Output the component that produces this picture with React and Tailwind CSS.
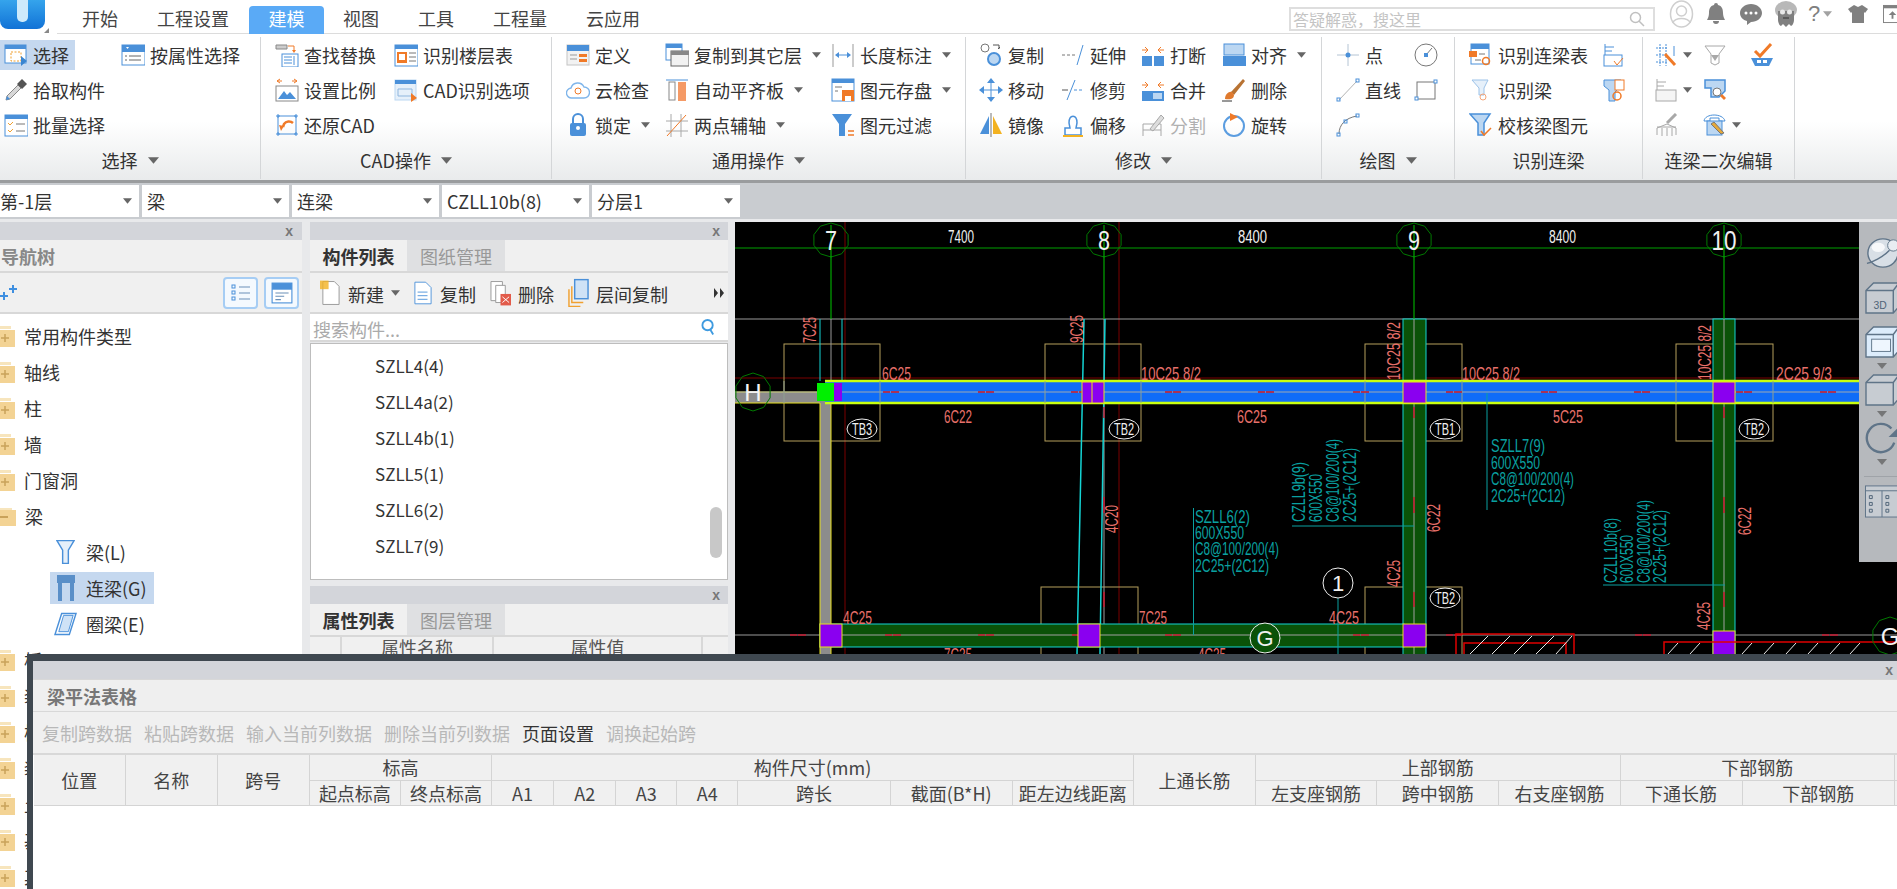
const B = "#4a90d9";
const L = "#bcd7f2";
const O = "#f07a28";
const G = "#a8a8a8";

const ICONS = {
  select: <><rect x="1" y="2" width="21" height="18" fill="#fff" stroke={B} /><rect x="1" y="2" width="21" height="4" fill={B} /><rect x="7" y="9" width="10" height="9" fill="none" stroke="#f0a030" strokeDasharray="2 1.5" /><path d="M17 13l6 5-6 5z" fill="#3a85d0" /></>,
  attr: <><rect x="1" y="2" width="23" height="20" fill="#fff" stroke={B} /><rect x="1" y="2" width="23" height="7" fill={B} /><path d="M5 4l3 0-1.500 2z" fill="#fff" /><path d="M8 13h12M8 17h12M4 13h2M4 17h2" stroke="#666" /></>,
  pick: <><path d="M2 22l1-4L14 7l3 3L6 21z" fill="#d8d8d8" stroke="#888" /><path d="M2 22l1-4 3 3z" fill={B} /><path d="M13 6l5-5 5 5-5 5z" fill="#555" /></>,
  batch: <><rect x="1" y="2" width="23" height="21" fill="#fff" stroke={B} /><rect x="1" y="2" width="23" height="4" fill={B} /><path d="M4 10l2 2 3-3M4 17l2 2 3-3" fill="none" stroke="#f0a030" /><path d="M12 11h9M12 18h9" stroke="#777" /></>,
  replace: <><path d="M1 2h11v4H1z" fill="#ccc" stroke="#888" /><path d="M13 3h6v5" fill="none" stroke={O} /><path d="M17 7l2 3 2-3z" fill={O} /><rect x="7" y="11" width="16" height="13" fill="#fff" stroke={B} /><path d="M9 14h8M9 17h8M9 20h8M19 13v9" stroke={B} /></>,
  floor: <><rect x="1" y="2" width="23" height="21" fill="#fff" stroke={B} /><rect x="1" y="2" width="23" height="4" fill={B} /><rect x="3" y="9" width="10" height="11" fill={O} /><rect x="5" y="11" width="6" height="6" fill="#fff" /><path d="M15 10h7M15 14h7M15 18h7" stroke="#777" /></>,
  scale: <><path d="M2 3h5M5 1l-3 2 3 2M17 3h5M19 1l3 2-3 2" stroke={O} fill="none" /><rect x="1" y="8" width="22" height="15" fill="#fff" stroke="#888" /><path d="M3 21l6-8 3 4 3-3 6 7z" fill={B} /></>,
  cadopt: <><rect x="1" y="2" width="21" height="20" fill="#e6f0fa" stroke={L} /><rect x="1" y="2" width="21" height="4" fill={B} /><path d="M4 11h14v7H4z" fill="none" stroke="#8fb6de" /><path d="M17 15l6 5-6 4z" fill={O} /></>,
  restore: <><rect x="3" y="3" width="18" height="18" fill="none" stroke={B} /><path d="M1 3h4M3 1v4M19 3h4M21 1v4M1 21h4M3 19v4M19 21h4M21 19v4" stroke={B} /><path d="M18 10a6 6 0 0 0-9 1l-1 3" fill="none" stroke={O} strokeWidth="2.500" /><path d="M4 12l5 1-3 5z" fill={O} /></>,
  define: <><rect x="1" y="2" width="22" height="20" fill="#f2f2f2" stroke="#c4c4c4" /><rect x="1" y="2" width="22" height="6" fill={B} /><path d="M4 12h7M4 16h7" stroke="#999" /><rect x="13" y="11" width="8" height="3" fill={O} /><rect x="13" y="16" width="8" height="3" fill={O} /></>,
  cloud: <><path d="M6 20a5 5 0 0 1-1-10 7 7 0 0 1 13-1 5.500 5.500 0 0 1 0 11z" fill="#fff" stroke="#7fb5ea" strokeWidth="1.400" /><circle cx="12" cy="13" r="3" fill="none" stroke={O} /></>,
  lock: <><rect x="4" y="10" width="16" height="13" rx="2" fill={B} /><path d="M7 10V6a5 5 0 0 1 10 0v4" fill="none" stroke={B} strokeWidth="2" /><circle cx="12" cy="15" r="2" fill="#fff" /></>,
  copyfloor: <><rect x="1" y="1" width="16" height="16" fill="#fff" stroke={B} /><rect x="1" y="1" width="16" height="4" fill={B} /><rect x="6" y="8" width="18" height="15" fill="#f2f2f2" stroke="#666" /><rect x="6" y="8" width="18" height="4" fill="#888" /></>,
  align: <><path d="M1 2h22" stroke={B} /><rect x="4" y="4" width="6" height="18" fill="#fff" stroke="#888" /><rect x="13" y="4" width="8" height="19" fill="#f59a66" /></>,
  twopoint: <><path d="M6 1v23M16 1v23M1 8h22M1 18h22" stroke={G} /><path d="M2 23L21 2" stroke={O} /></>,
  dim: <><path d="M2 1v23M22 1v23" stroke="#999" /><path d="M6 12h12" stroke={B} /><path d="M8 9l-4 3 4 3zM16 9l4 3-4 3z" fill={B} /></>,
  save: <><rect x="1" y="1" width="22" height="22" fill="#fff" stroke={B} /><rect x="1" y="1" width="22" height="4" fill={B} /><path d="M4 9h7M4 13h3" stroke="#777" /><rect x="11" y="12" width="12" height="11" fill={O} /><rect x="14" y="18" width="6" height="5" fill="#fff" /></>,
  filter: <><path d="M1 1h20l-7 10v12h-6V11z" fill={B} /><path d="M17 18h6M17 22h6" stroke={O} strokeWidth="1.500" /></>,
  copy: <><circle cx="6" cy="5" r="4" fill="#fff" stroke="#777" /><circle cx="15" cy="16" r="6" fill={L} stroke={B} strokeWidth="2" /><path d="M14 2h6v4M19 6l2-2" fill="none" stroke="#555" /></>,
  move: <><path d="M12 3v18M3 12h18" stroke={B} /><path d="M12 0l4 5H8zM12 24l4-5H8zM0 12l5-4v8zM24 12l-5-4v8z" fill={B} /></>,
  mirror: <><path d="M10 3L1 21h9z" fill={B} /><path d="M14 3l9 18h-9z" fill="#f3b221" /><path d="M12 0v24" stroke="#777" /></>,
  extend: <><path d="M1 12h13" stroke="#777" strokeDasharray="3 2" /><path d="M22 2l-6 20" stroke={B} /></>,
  trim: <><path d="M14 2L6 22" stroke={B} /><path d="M1 12h6" stroke="#555" /><path d="M13 12h10" stroke={B} strokeDasharray="3 2" /></>,
  offset: <><path d="M4 22v-7h5l-1-5c0-9 8-9 8 0l-1 5h5v7z" fill="#fff" stroke={B} strokeWidth="1.500" /><path d="M2 23h20" stroke="#f3b221" strokeWidth="2" /></>,
  cut: <><path d="M1 7h6M4 4l3 3-3 3M17 7h6M20 4l-3 3 3 3" stroke={O} fill="none" /><rect x="1" y="13" width="10" height="10" fill={B} /><rect x="13" y="13" width="10" height="10" fill={B} /></>,
  merge: <><path d="M1 7h6M4 4l3 3-3 3M17 7h6M20 4l-3 3 3 3" stroke={O} fill="none" /><rect x="1" y="13" width="22" height="10" fill={B} /><rect x="12" y="15" width="9" height="6" fill={L} /></>,
  split: <><path d="M2 23V11h18v12M2 17h18" fill="none" stroke={G} /><path d="M9 16L20 2l3 3-11 13z" fill="#ddd" stroke={G} /></>,
  alignr: <><rect x="2" y="1" width="20" height="11" fill={L} stroke={B} /><rect x="1" y="13" width="23" height="10" fill={B} /></>,
  del: <><path d="M9 14L21 1l2 2-11 14z" fill="#b87333" /><path d="M3 21c0-5 4-8 7-7l2 3c0 4-4 5-9 4z" fill="#e07a2e" /><path d="M0 23h10" stroke="#333" /></>,
  rotate: <><circle cx="12" cy="13" r="10" fill="none" stroke="#5b9de0" strokeWidth="2" /><path d="M8 0l8 4-8 4z" fill={O} /></>,
  point: <><path d="M12 1v22M1 12h22" stroke="#b4c4d4" /><circle cx="12" cy="12" r="2.500" fill={B} /></>,
  line: <><path d="M3 22L21 3" stroke="#b4b4b4" /><rect x="1" y="20" width="3" height="3" fill="none" stroke={B} /><rect x="20" y="1" width="3" height="3" fill="none" stroke={B} /></>,
  arc: <><path d="M3 21C3 12 9 5 21 3" fill="none" stroke="#777" /><rect x="1" y="20" width="3" height="3" fill="none" stroke={B} /><rect x="20" y="1" width="3" height="3" fill="none" stroke={B} /><rect x="8" y="7" width="3" height="3" fill="none" stroke={B} /></>,
  circle: <><circle cx="12" cy="12" r="11" fill="none" stroke="#777" /><path d="M12 12l6-7" stroke="#777" /><rect x="10" y="10" width="4" height="4" fill={B} /></>,
  rect: <><rect x="3" y="4" width="18" height="17" fill="none" stroke="#777" /><rect x="1" y="19" width="3" height="3" fill="#fff" stroke={B} /><rect x="20" y="2" width="3" height="3" fill="#fff" stroke={B} /></>,
  beamTable: <><rect x="2" y="1" width="18" height="20" fill="#fff" stroke={B} /><rect x="2" y="1" width="18" height="5" fill={B} /><rect x="0" y="8" width="8" height="6" fill={O} /><path d="M10 11h6M6 17h6" stroke="#777" /><circle cx="17" cy="18" r="3.500" fill="none" stroke={O} strokeWidth="1.500" /></>,
  beam: <><path d="M3 2h16l-4 8v7h-5v-7z" fill="#e6f0fa" stroke="#9cc2e8" /><circle cx="14" cy="19" r="3" fill="none" stroke="#f4a67a" /></>,
  beamCheck: <><path d="M1 1h20l-6 9v12H9V10z" fill={L} stroke={B} strokeWidth="1.500" /><path d="M12 18l3 4 7-7" fill="none" stroke={O} strokeWidth="1.500" /></>,
  stack: <><path d="M3 1v13M3 4h9M3 8h7" stroke={B} fill="none" /><rect x="2" y="12" width="18" height="11" fill="#fff" stroke={B} /><path d="M12 18l3 4 6-7" fill="none" stroke={O} /></>,
  beamDoc: <><path d="M2 2h17v6l-6 6v9H7V12L2 8z" fill={L} stroke={B} /><rect x="13" y="2" width="9" height="10" fill="#fff" stroke={O} /><circle cx="15" cy="18" r="4" fill="none" stroke={O} strokeWidth="1.500" /></>,
  grid: <><path d="M2 5h12M2 12h12M2 19h12M6 1v22M12 1v22" stroke={B} strokeDasharray="2 1" /><path d="M11 11l10 11" stroke={O} strokeWidth="3" /><path d="M20 3v10" stroke={B} /></>,
  funnel: <><path d="M2 3h20l-6 8v9l-4 2-4-2v-9z" fill="#fff" stroke={G} /><path d="M8 12h8l-4 6z" fill={G} /></>,
  okbeam: <><path d="M5 8l5 5L21 1" fill="none" stroke={O} strokeWidth="3" /><path d="M1 15h22l-4 8H5z" fill={B} /><path d="M7 17h4v3H7zM13 17h4v3h-4z" fill="#fff" /></>,
  stack2: <><path d="M3 1v13M3 4h9M3 8h7" stroke={G} fill="none" /><rect x="2" y="12" width="20" height="11" fill="#f5f5f5" stroke={G} /></>,
  beamSearch: <><path d="M2 2h20v11l-6 6H8V10H2z" fill={L} stroke={B} strokeWidth="1.500" /><circle cx="14" cy="14" r="4" fill="#fff" stroke="#777" /><path d="M17 18l4 4 2-2-4-4z" fill={O} /></>,
  brush: <><path d="M13 10L22 1" stroke={G} strokeWidth="3" /><path d="M3 22v-7l10-4 9 4v7" fill="none" stroke={G} /><path d="M3 14h19M8 15v8M13 15v8M18 15v8" stroke={G} /></>,
  phoneEdit: <><path d="M1 8C2 0 20 0 22 8H16V5H7v3z" fill="#fff" stroke={B} /><rect x="4" y="8" width="15" height="14" fill={L} stroke={B} /><path d="M8 11l10 10 3-1-10-11z" fill="#e4a83a" stroke="#777" /></>,
};

function Caret({ className = "" }) {
  return (
    <svg viewBox="0 0 10 6" className={`w-[9px] h-[6px] shrink-0 ${className}`}>
      <path d="M0 0h10L5 6z" fill="#666" />
    </svg>
  );
}

function Icon({ name }) {
  return (
    <svg viewBox="0 0 24 24" className="w-[24px] h-[24px] shrink-0">
      {ICONS[name]}
    </svg>
  );
}

function Item({ icon, label, caret, off, active }) {
  return (
    <div className={`h-[35px] flex items-center gap-[5px] ${off ? "text-[#b0b0b0]" : "text-[#333]"}`}>
      <div className={`flex items-center gap-[5px] h-[30px] ${active ? "bg-[#c5d8ef] -ml-[4px] pl-[4px] pr-[6px]" : ""}`}>
        {icon && <Icon name={icon} />}
        {label && <span className="whitespace-nowrap">{label}</span>}
      </div>
      {caret && <Caret className={label ? "ml-[5px]" : ""} />}
    </div>
  );
}

function Group({ title, width, pad, cols, caret = true }) {
  return (
    <div className={`${width} ${pad} shrink-0 h-[142px] border-r border-[#d4d6d8] flex flex-col relative`}>
      <div className="flex h-[107px]">
        {cols.map((col, i) => (
          <div key={i} className={`${col.w} shrink-0`}>
            {col.items.map((it, j) => (it ? <Item key={j} {...it} /> : <div key={j} className="h-[35px]" />))}
          </div>
        ))}
      </div>
      <div className="absolute bottom-[3px] left-0 right-0 h-[32px] flex items-center justify-center gap-[10px] text-[#333]">
        <span>{title}</span>
        {caret && <Caret className="w-[11px] h-[7px]" />}
      </div>
    </div>
  );
}

const RIBBON = [
  {
    title: "选择", width: "w-[261px]", pad: "pl-[4px]",
    cols: [
      { w: "w-[117px]", items: [{ icon: "select", label: "选择", active: true }, { icon: "pick", label: "拾取构件" }, { icon: "batch", label: "批量选择" }] },
      { w: "w-[130px]", items: [{ icon: "attr", label: "按属性选择" }] },
    ],
  },
  {
    title: "CAD操作", width: "w-[291px]", pad: "pl-[14px]",
    cols: [
      { w: "w-[119px]", items: [{ icon: "replace", label: "查找替换" }, { icon: "scale", label: "设置比例" }, { icon: "restore", label: "还原CAD" }] },
      { w: "w-[150px]", items: [{ icon: "floor", label: "识别楼层表" }, { icon: "cadopt", label: "CAD识别选项" }] },
    ],
  },
  {
    title: "通用操作", width: "w-[414px]", pad: "pl-[14px]",
    cols: [
      { w: "w-[99px]", items: [{ icon: "define", label: "定义" }, { icon: "cloud", label: "云检查" }, { icon: "lock", label: "锁定", caret: true }] },
      { w: "w-[166px]", items: [{ icon: "copyfloor", label: "复制到其它层", caret: true }, { icon: "align", label: "自动平齐板", caret: true }, { icon: "twopoint", label: "两点辅轴", caret: true }] },
      { w: "w-[130px]", items: [{ icon: "dim", label: "长度标注", caret: true }, { icon: "save", label: "图元存盘", caret: true }, { icon: "filter", label: "图元过滤" }] },
    ],
  },
  {
    title: "修改", width: "w-[356px]", pad: "pl-[13px]",
    cols: [
      { w: "w-[82px]", items: [{ icon: "copy", label: "复制" }, { icon: "move", label: "移动" }, { icon: "mirror", label: "镜像" }] },
      { w: "w-[80px]", items: [{ icon: "extend", label: "延伸" }, { icon: "trim", label: "修剪" }, { icon: "offset", label: "偏移" }] },
      { w: "w-[81px]", items: [{ icon: "cut", label: "打断" }, { icon: "merge", label: "合并" }, { icon: "split", label: "分割", off: true }] },
      { w: "w-[90px]", items: [{ icon: "alignr", label: "对齐", caret: true }, { icon: "del", label: "删除" }, { icon: "rotate", label: "旋转" }] },
    ],
  },
  {
    title: "绘图", width: "w-[133px]", pad: "pl-[14px]",
    cols: [
      { w: "w-[78px]", items: [{ icon: "point", label: "点" }, { icon: "line", label: "直线" }, { icon: "arc" }] },
      { w: "w-[30px]", items: [{ icon: "circle" }, { icon: "rect" }] },
    ],
  },
  {
    title: "识别连梁", width: "w-[188px]", pad: "pl-[14px]", caret: false,
    cols: [
      { w: "w-[133px]", items: [{ icon: "beamTable", label: "识别连梁表" }, { icon: "beam", label: "识别梁" }, { icon: "beamCheck", label: "校核梁图元" }] },
      { w: "w-[30px]", items: [{ icon: "stack" }, { icon: "beamDoc" }] },
    ],
  },
  {
    title: "连梁二次编辑", width: "w-[152px]", pad: "pl-[11px]", caret: false,
    cols: [
      { w: "w-[49px]", items: [{ icon: "grid", caret: true }, { icon: "stack2", caret: true }, { icon: "brush" }] },
      { w: "w-[47px]", items: [{ icon: "funnel" }, { icon: "beamSearch" }, { icon: "phoneEdit", caret: true }] },
      { w: "w-[30px]", items: [{ icon: "okbeam" }] },
    ],
  },
];

function TopIcons() {
  return (
    <div className="flex items-center ml-[14px] shrink-0">
      <svg viewBox="0 0 24 28" className="w-[25px] h-[28px]">
        <ellipse cx="12" cy="14" rx="11" ry="13" fill="#fff" stroke="#cfcfcf" strokeWidth="1.500" />
        <circle cx="12" cy="11" r="5" fill="none" stroke="#cfcfcf" strokeWidth="1.500" />
        <path d="M3 23c3-6 15-6 18 0" fill="none" stroke="#cfcfcf" strokeWidth="1.500" />
      </svg>
      <svg viewBox="0 0 18 22" className="w-[18px] h-[22px] ml-[13px]">
        <path d="M9 0a2 2 0 0 1 2 2c4 1 5 4 5 8 0 3 1 5 2 7H0c1-2 2-4 2-7 0-4 1-7 5-8a2 2 0 0 1 2-2zM6 18h6a3 3 0 0 1-6 0z" fill="#808080" />
      </svg>
      <svg viewBox="0 0 22 22" className="w-[22px] h-[22px] ml-[15px]">
        <path d="M11 1c6 0 11 4 11 9s-5 9-11 9l-4 3v-4C3 17 0 14 0 10c0-5 5-9 11-9z" fill="#808080" />
        <circle cx="6" cy="10" r="1.500" fill="#fff" />
        <circle cx="11" cy="10" r="1.500" fill="#fff" />
        <circle cx="16" cy="10" r="1.500" fill="#fff" />
      </svg>
      <svg viewBox="0 0 24 28" className="w-[24px] h-[28px] ml-[12px]">
        <ellipse cx="12" cy="10" rx="11" ry="9" fill="#b8b8b8" />
        <path d="M4 11h16v9c0 3-2 6-3 6l-2-2-3 3-3-3-2 2c-1 0-3-3-3-6z" fill="#808080" />
        <circle cx="8.500" cy="12" r="2.500" fill="#e8e8e8" />
        <circle cx="15.500" cy="12" r="2.500" fill="#e8e8e8" />
        <path d="M9 18h6" stroke="#333" />
      </svg>
      <span className="ml-[10px] text-[22px] leading-none text-[#808080] font-['Liberation_Sans',sans-serif]">?</span>
      <Caret className="ml-[3px] w-[7px] h-[4px] opacity-60" />
      <svg viewBox="0 0 20 20" className="w-[20px] h-[20px] ml-[16px]">
        <path d="M6 1l4 2 4-2 6 4-3 4-1-1v11H4V8L3 9 0 5z" fill="#808080" />
      </svg>
      <svg viewBox="0 0 20 20" className="w-[19px] h-[20px] ml-[15px] shrink-0">
        <rect x="0.500" y="1" width="19" height="18" fill="#fff" stroke="#808080" />
        <rect x="0.500" y="1" width="19" height="3" fill="#808080" />
        <path d="M10 7l4 4h-3v4H9v-4H6z" fill="#808080" />
      </svg>
    </div>
  );
}

function TabsRow() {
  return (
    <div className="h-[34px] shrink-0 flex items-start bg-white relative text-[#444]">
      <div className="w-[57px] h-[34px] shrink-0 relative">
        <div className="w-[45px] h-[29px] rounded-b-[8px] bg-gradient-to-b from-[#35a4ec] to-[#1272d6] relative overflow-hidden">
          <div className="absolute left-[17px] top-0 w-[11px] h-[22px] rounded-b-[5px] bg-[#cdeafb]" />
        </div>
        <div className="absolute left-[44px] top-[28px] w-0 h-0 border-l-[5px] border-l-transparent border-b-[5px] border-b-[#888]" />
      </div>
      <div className="flex h-[34px] border-b border-[#dcdcdc] flex-1 items-start whitespace-nowrap">
        <div className="pl-[25px] pr-[20px] pt-[4px] leading-[28px] shrink-0">开始</div>
        <div className="pl-[19px] pr-[20px] pt-[4px] leading-[28px] shrink-0">工程设置</div>
        <div className="w-[75px] h-[28px] mt-[6px] text-center leading-[24px] rounded-t-[4px] bg-[#5aaaf6] text-white shrink-0">建模</div>
        <div className="pl-[19px] pr-[19px] pt-[4px] leading-[28px] shrink-0">视图</div>
        <div className="pl-[20px] pr-[19px] pt-[4px] leading-[28px] shrink-0">工具</div>
        <div className="pl-[20px] pr-[19px] pt-[4px] leading-[28px] shrink-0">工程量</div>
        <div className="pl-[20px] pt-[4px] leading-[28px] shrink-0">云应用</div>
        <div className="ml-[649px] mt-[7px] w-[366px] h-[24px] border-2 border-[#dedede] flex items-center justify-between pl-[2px] pr-[8px] text-[16px] text-[#c4c4c4] shrink-0">
          <span>答疑解惑，搜这里</span>
          <svg viewBox="0 0 16 16" className="w-[16px] h-[16px]">
            <circle cx="6.500" cy="6.500" r="5" fill="none" stroke="#c0c0c0" strokeWidth="1.500" />
            <path d="M10 10l5 5" stroke="#c0c0c0" strokeWidth="1.500" />
          </svg>
        </div>
        <TopIcons />
      </div>
    </div>
  );
}

function Ribbon() {
  return (
    <div className="h-[149px] shrink-0 bg-gradient-to-b from-white from-60% to-[#e9ebec] border-b-[3px] border-[#9a9c9e] flex pt-[3px] text-[18px]">
      {RIBBON.map((g) => (
        <Group key={g.title} {...g} />
      ))}
    </div>
  );
}

const COMBOS = [
  ["第-1层", "w-[139px]", "pl-0"],
  ["梁", "w-[147px]", "pl-[5px]"],
  ["连梁", "w-[147px]", "pl-[5px]"],
  ["CZLL10b(8)", "w-[147px]", "pl-[5px]"],
  ["分层1", "w-[148px]", "pl-[5px]"],
];

function ComboBar() {
  return (
    <div className="h-[36px] shrink-0 bg-[#c9ccd0] flex items-center gap-[3px]">
      {COMBOS.map(([text, w, pl]) => (
        <div key={text} className={`${w} ${pl} h-[32px] bg-white flex items-center justify-between pr-[7px] text-[18px] text-[#333]`}>
          <span className="whitespace-nowrap">{text}</span>
          <Caret className="w-[7px] h-[5px]" />
        </div>
      ))}
    </div>
  );
}

function CloseBar({ pr = "pr-[9px]" }) {
  return (
    <div className={`h-[18px] shrink-0 bg-[#d3d5da] flex items-center justify-end ${pr} text-[14px] leading-none text-[#777] font-['Liberation_Sans',sans-serif] font-bold`}>
      x
    </div>
  );
}

function Folder({ open }) {
  return open ? (
    <svg viewBox="0 0 20 20" className="w-[20px] h-[20px] -ml-[4px] shrink-0">
      <path d="M0 4h20v16H0z" fill="#f3d394" />
      <path d="M4 2h12v2H4z" fill="#f7e5bd" />
      <path d="M3 10h9v2H3z" fill="#c9a25a" />
    </svg>
  ) : (
    <svg viewBox="0 0 20 22" className="w-[20px] h-[22px] -ml-[5px] shrink-0">
      <path d="M0 5h20v17H0z" fill="#f3d394" />
      <path d="M5 1h11v3H5z" fill="#f7e5bd" />
      <path d="M6 13h8M10 9v8" stroke="#c9a25a" strokeWidth="1.500" />
    </svg>
  );
}

function TreeRow({ label, open }) {
  return (
    <div className="h-[36px] flex items-center gap-[9px] whitespace-nowrap">
      <Folder open={open} />
      <span>{label}</span>
    </div>
  );
}

function NavTree() {
  return (
    <div className="w-[302px] h-full shrink-0 bg-white flex flex-col text-[18px] text-[#333] overflow-hidden">
      <CloseBar />
      <div className="h-[33px] shrink-0 bg-[#f0f0f0] border-b-2 border-[#d8d8d8] flex items-center text-[#888] font-bold pl-[1px]">导航树</div>
      <div className="h-[41px] shrink-0 bg-[#f0f0f0] border-b-2 border-[#d8d8d8] flex items-center">
        <svg viewBox="0 0 18 18" className="w-[18px] h-[18px]">
          <path d="M0 12h8M4 8v8" stroke="#3f8fe0" strokeWidth="2" />
          <path d="M9 5h8M13 1v8" stroke="#3f8fe0" strokeWidth="2" />
        </svg>
        <div className="ml-[205px] w-[35px] h-[32px] rounded-[4px] border-2 border-[#a6cdf4] bg-[#f4f9fe] flex items-center justify-center">
          <svg viewBox="0 0 20 20" className="w-[20px] h-[20px]">
            <path d="M8 4h11M8 10h11M8 16h11" stroke="#6a8fb8" />
            <rect x="1" y="2" width="3" height="3" fill="none" stroke="#4a90d9" />
            <rect x="1" y="8" width="3" height="3" fill="none" stroke="#4a90d9" />
            <rect x="1" y="14" width="3" height="3" fill="none" stroke="#4a90d9" />
          </svg>
        </div>
        <div className="ml-[6px] w-[35px] h-[32px] rounded-[4px] border-2 border-[#a6cdf4] bg-[#f4f9fe] flex items-center justify-center">
          <svg viewBox="0 0 20 20" className="w-[22px] h-[22px]">
            <rect x="1" y="1" width="18" height="18" fill="#fff" stroke="#4a90d9" />
            <rect x="1" y="1" width="18" height="6" fill="#4a90d9" />
            <path d="M4 10h12M4 13h8M4 16h5" stroke="#6a8fb8" />
          </svg>
        </div>
      </div>
      <div className="pt-[4px] shrink-0">
        {["常用构件类型", "轴线", "柱", "墙", "门窗洞"].map((t) => (
          <TreeRow key={t} label={t} />
        ))}
        <TreeRow label="梁" open />
        <div className="pl-[50px]">
          <div className="h-[36px] flex items-center pl-[6px] gap-[11px]">
            <svg viewBox="0 0 20 28" className="w-[19px] h-[28px]">
              <path d="M1 2h18l-6 10v14H7V12z" fill="#e6f0fa" stroke="#4a90d9" strokeWidth="1.500" />
            </svg>
            梁(L)
          </div>
          <div className="h-[32px] my-[2px] w-[104px] bg-[#c5d8ef] flex items-center pl-[7px] gap-[11px]">
            <svg viewBox="0 0 18 26" className="w-[18px] h-[26px]">
              <path d="M0 0h18v8H0z" fill="#5a8fc8" />
              <path d="M1 8h4v18H1zM13 8h4v18h-4z" fill="#5a8fc8" />
            </svg>
            连梁(G)
          </div>
          <div className="h-[36px] flex items-center pl-[4px] gap-[9px]">
            <svg viewBox="0 0 24 24" className="w-[23px] h-[24px]">
              <path d="M8 1h15l-7 22H1z" fill="#fff" stroke="#4a90d9" strokeWidth="1.500" />
              <path d="M10 3h10l-5 17H5z" fill="#cfe2f6" stroke="#4a90d9" />
            </svg>
            圈梁(E)
          </div>
        </div>
        {["板", "装配式", "楼梯", "装修", "土方", "基础", "其它"].map((t) => (
          <TreeRow key={t} label={t} />
        ))}
      </div>
    </div>
  );
}

function PanelTabs({ a, b }) {
  return (
    <div className="h-[33px] shrink-0 bg-[#f0f0f0] border-b-2 border-[#d8d8d8] flex">
      <div className="w-[97px] h-[31px] flex items-center justify-center font-bold text-[#333]">{a}</div>
      <div className="w-[98px] h-[31px] bg-[#dfe0e2] flex items-center justify-center text-[#999]">{b}</div>
    </div>
  );
}

const LIST = ["SZLL4(4)", "SZLL4a(2)", "SZLL4b(1)", "SZLL5(1)", "SZLL6(2)", "SZLL7(9)"];

function RightPanels() {
  return (
    <div className="w-[418px] ml-[8px] shrink-0 h-full flex flex-col text-[18px] text-[#333]">
      <CloseBar pr="pr-[8px]" />
      <PanelTabs a="构件列表" b="图纸管理" />
      <div className="h-[41px] shrink-0 bg-[#f0f0f0] border-b-2 border-[#d8d8d8] flex items-center pl-[10px] relative">
        <svg viewBox="0 0 22 26" className="w-[21px] h-[26px] shrink-0">
          <path d="M3 1h12l5 5v19H3z" fill="#fff" stroke="#999" />
          <path d="M0 0h9v9H0z" fill="#f3b221" opacity="0.8" />
        </svg>
        <span className="ml-[7px] pt-[2px]">新建</span>
        <Caret className="ml-[7px] w-[8px] h-[5px]" />
        <svg viewBox="0 0 20 26" className="ml-[14px] w-[18px] h-[26px] shrink-0">
          <path d="M1 1h12l6 6v18H1z" fill="#fff" stroke="#4a90d9" />
          <path d="M4 12h11M4 16h11M4 20h11" stroke="#4a90d9" />
        </svg>
        <span className="ml-[8px] pt-[2px]">复制</span>
        <svg viewBox="0 0 22 26" className="ml-[14px] w-[21px] h-[26px] shrink-0">
          <path d="M1 1h12v20H1z" fill="#fff" stroke="#999" />
          <path d="M6 5h10v18H6z" fill="#fff" stroke="#999" />
          <rect x="11" y="14" width="11" height="12" fill="#e25b4a" />
          <path d="M13 17l7 6M20 17l-7 6" stroke="#fff" />
        </svg>
        <span className="ml-[7px] pt-[2px]">删除</span>
        <svg viewBox="0 0 22 30" className="ml-[14px] w-[21px] h-[30px] shrink-0">
          <rect x="7" y="1" width="14" height="20" fill="#cfe2f6" stroke="#4a90d9" strokeWidth="1.500" />
          <path d="M4 8v17h12M1 11v18h12" fill="none" stroke="#f0a030" strokeWidth="1.500" />
        </svg>
        <span className="ml-[7px] pt-[2px]">层间复制</span>
        <svg viewBox="0 0 10 10" className="ml-[46px] w-[10px] h-[10px]">
          <path d="M0 0l4 5-4 5zM6 0l4 5-4 5z" fill="#333" />
        </svg>
      </div>
      <div className="h-[28px] shrink-0 bg-white border-b-2 border-[#d8d8d8] flex items-center justify-between pl-[3px] pr-[12px] text-[#aaa]">
        <span className="pt-[3px]">搜索构件...</span>
        <svg viewBox="0 0 16 18" className="w-[15px] h-[18px]">
          <circle cx="7" cy="7" r="5.500" fill="#fff" stroke="#3f9be0" strokeWidth="2" />
          <path d="M10 12l3 5" stroke="#3f9be0" strokeWidth="2" />
        </svg>
      </div>
      <div className="h-[237px] shrink-0 bg-white border border-[#bdbdbd] mt-[1px] relative pt-[3px] pl-[64px]">
        {LIST.map((t) => (
          <div key={t} className="h-[36px] flex items-center text-[17px]">{t}</div>
        ))}
        <div className="absolute right-[5px] top-[163px] w-[12px] h-[51px] rounded-[6px] bg-[#c8c8c8]" />
      </div>
      <div className="mt-[6px] shrink-0">
        <CloseBar pr="pr-[8px]" />
      </div>
      <PanelTabs a="属性列表" b="图层管理" />
      <div className="flex h-[40px] shrink-0 bg-[#f0f0f0] text-[#555]">
        <div className="w-[32px] border-r-2 border-[#d8d8d8]" />
        <div className="w-[152px] border-r-2 border-[#d8d8d8] text-center pt-[1px]">属性名称</div>
        <div className="w-[209px] border-r-2 border-[#d8d8d8] text-center pt-[1px]">属性值</div>
      </div>
    </div>
  );
}

const hexPoints = (cx, cy, rx, ry, n = 10) =>
  Array.from({ length: n }, (_, i) => {
    const a = (i / n) * Math.PI * 2 + Math.PI / 2;
    return `${(cx + rx * Math.cos(a)).toFixed(1)},${(cy + ry * Math.sin(a)).toFixed(1)}`;
  }).join(" ");

function CadText({ x, y, w, fill, size = 18, rot, children }) {
  return (
    <text
      x={x}
      y={y}
      fill={fill}
      fontSize={size}
      textLength={w}
      lengthAdjust="spacingAndGlyphs"
      fontFamily="'Liberation Sans', sans-serif"
      transform={rot ? `rotate(-90 ${x} ${y})` : undefined}
    >
      {children}
    </text>
  );
}

const PINK = "#e8706a";
const TEAL = "#0aa0a0";
const RED = "#c4162e";

const H_LABELS = [
  ["6C25", 882, 380, 29], ["10C25 8/2", 1141, 380, 60], ["6C22", 944, 423, 28], ["6C25", 1237, 423, 30],
  ["10C25 8/2", 1462, 380, 58], ["5C25", 1553, 423, 30], ["2C25 9/3", 1776, 380, 56],
  ["4C25", 843, 624, 29], ["7C25", 1139, 624, 28], ["4C25", 1329, 624, 30],
  ["7C25", 944, 661, 28], ["4C25", 1198, 661, 28],
];
const V_LABELS = [
  ["7C25", 816, 343, 26], ["9C25", 1083, 343, 28], ["10C25 8/2", 1400, 380, 58], ["10C25 8/2", 1711, 380, 55],
  ["4C20", 1118, 533, 28], ["6C22", 1440, 532, 28], ["6C22", 1751, 535, 28], ["4C25", 1400, 587, 27], ["4C25", 1710, 630, 28],
];
const NOTES = [
  ["SZLL6(2)", 1195, 523, 55], ["600X550", 1195, 539, 49], ["C8@100/200(4)", 1195, 555, 84], ["2C25+(2C12)", 1195, 572, 74],
  ["SZLL7(9)", 1491, 452, 54], ["600X550", 1491, 469, 49], ["C8@100/200(4)", 1491, 485, 83], ["2C25+(2C12)", 1491, 502, 74],
];
const V_NOTES = [
  ["CZLL9b(9)", 1305, 522, 60], ["600X550", 1322, 522, 48], ["C8@100/200(4)", 1339, 522, 83], ["2C25+(2C12)", 1356, 522, 74],
  ["CZLL10b(8)", 1617, 583, 65], ["600X550", 1633, 583, 48], ["C8@100/200(4)", 1650, 583, 83], ["2C25+(2C12)", 1666, 583, 73],
];
const BLUE_DASHES = [883, 978, 1071, 1165, 1258, 1353, 1446, 1541, 1634, 1736, 1820];
const GREEN_DASHES = [790, 885, 978, 1072, 1165, 1260, 1353, 1446, 1635, 1822];
const AXES = [["7", 831, 12], ["8", 1104, 12], ["9", 1414, 12], ["10", 1724, 25]];
const CAPS = [[784, 344, 96, 97], [1045, 344, 96, 97], [1365, 344, 97, 97], [1676, 344, 97, 97], [1041, 587, 97, 70], [1365, 587, 97, 70]];
const BUBBLES = [["TB3", 862, 429], ["TB2", 1124, 429], ["TB1", 1445, 429], ["TB2", 1754, 429], ["TB2", 1445, 598]];

function CadDrawing() {
  return (
    <svg viewBox="735 222 1162 432" className="w-[1162px] h-[432px] block" fill="none">
      <path d="M845 219v435M1119 219v435M735 378h1124" stroke="#7a0000" />
      <path d="M735 248h1124" stroke="#00a000" />
      <path d="M735 319h1124M735 635h1162" stroke="#9a9a9a" />

      {CAPS.map(([x, y, w, h], i) => (
        <rect key={i} x={x} y={y} width={w} height={h} stroke="#b59f5c" />
      ))}

      {/* vertical beams */}
      <rect x="1403" y="319" width="23" height="340" fill="#0a5208" stroke="#14d4d4" />
      <rect x="1713" y="319" width="22" height="340" fill="#0a5208" stroke="#14d4d4" />
      <path d="M1414 319v340M1724 319v340M1104 319v340" stroke="#a0a0a0" />
      <path d="M820 319v62M842 319v62" stroke="#14d4d4" />
      <path d="M831 319v62" stroke="#9a9a9a" />
      <path d="M1084 319L1077 654M1105 319L1100 654" stroke="#14d4d4" strokeWidth="1.500" />

      {/* green beam */}
      <rect x="820" y="624" width="584" height="23" fill="#0a5208" stroke="#14d4d4" />
      <path d="M820 635h584" stroke="#a0a0a0" />

      {/* gray beam on the left */}
      <rect x="735" y="392" width="96" height="11" fill="#8c8c8c" />
      <rect x="820" y="392" width="11" height="262" fill="#8c8c8c" />
      <path d="M735 392h85M735 403h85V654M831 403V654" stroke="#e8e020" />

      {/* blue beam */}
      <rect x="825" y="381" width="1034" height="22" fill="#0f6cf8" />
      <path d="M825 381h1034M825 403h1034" stroke="#c8ff10" strokeWidth="2.500" />
      <path d="M735 392h1124" stroke="#a0a8b0" />
      {CAPS.slice(0, 4).map(([x, , w], i) => (
        <path key={i} d={`M${x} 381v22M${x + w} 381v22`} stroke="#8fa090" />
      ))}
      {BLUE_DASHES.map((x) => (
        <path key={x} d={`M${x} 392h16`} stroke={RED} strokeWidth="1.500" strokeDasharray="7 1 8" />
      ))}
      {GREEN_DASHES.map((x) => (
        <path key={x} d={`M${x} 635h16`} stroke={RED} strokeWidth="1.500" strokeDasharray="7 1 8" />
      ))}
      {[1414, 1724, 1104].map((x) => (
        <path key={x} d={`M${x} 407v11M${x} 497v16M${x} 592v15`} stroke={RED} strokeWidth="1.500" />
      ))}

      {/* columns */}
      <rect x="834" y="383" width="8" height="18" fill="#8a00f0" />
      <rect x="1082" y="382" width="22" height="21" fill="#8a00f0" stroke="#e8e020" />
      <path d="M1092 382v21" stroke="#e8e020" />
      <rect x="1403" y="382" width="23" height="21" fill="#8a00f0" stroke="#e8e020" />
      <rect x="1713" y="382" width="22" height="21" fill="#8a00f0" stroke="#e8e020" />
      <rect x="820" y="624" width="22" height="23" fill="#8a00f0" stroke="#e8e020" />
      <rect x="1078" y="624" width="22" height="23" fill="#8a00f0" stroke="#e8e020" />
      <rect x="1403" y="624" width="23" height="23" fill="#8a00f0" stroke="#e8e020" />
      <rect x="1713" y="631" width="22" height="26" fill="#8a00f0" stroke="#e8e020" />
      <rect x="817" y="383" width="17" height="18" fill="#00f000" />

      {/* hatching */}
      <path d="M1456 654v-20h118v20M1464 654v-11h102v11M1664 654v-12h233" stroke="#e00000" strokeWidth="1.500" />
      <path d="M1470 654l18-18M1492 654l18-18M1514 654l18-18M1536 654l18-18M1556 654l16-18" stroke="#e8e8e8" />
      <path d="M1668 654l10-11M1690 654l10-11M1742 654l10-11M1764 654l10-11M1786 654l10-11M1808 654l10-11M1830 654l10-11M1850 654l10-11" stroke="#e8e8e8" />

      {/* leaders */}
      <path d="M1193.500 508v127M1292 526h122M1487 393v117M1603 585h122M1338 598v56" stroke={TEAL} />

      {AXES.map(([t, x, w]) => (
        <g key={t}>
          <polygon points={hexPoints(x, 240, 18, 17)} stroke="#007a00" />
          <path d={`M${x} 225v94`} stroke="#00c800" />
          <CadText x={x - w / 2} y={250} w={w} fill="#f0f0f0" size={28}>{t}</CadText>
        </g>
      ))}
      <polygon points={hexPoints(753, 392, 18, 19)} stroke="#007a00" />
      <text x="753" y="401" textAnchor="middle" fill="#f4f4f4" fontSize="24" fontFamily="'Liberation Sans', sans-serif">H</text>
      <polygon points={hexPoints(1890, 636, 18, 19)} stroke="#007a00" />
      <text x="1890" y="645" textAnchor="middle" fill="#f4f4f4" fontSize="24" fontFamily="'Liberation Sans', sans-serif">G</text>

      <CadText x={948} y={243} w={26} fill="#f0f0f0">7400</CadText>
      <CadText x={1238} y={243} w={29} fill="#f0f0f0">8400</CadText>
      <CadText x={1549} y={243} w={27} fill="#f0f0f0">8400</CadText>

      {H_LABELS.map(([t, x, y, w], i) => (
        <CadText key={i} x={x} y={y} w={w} fill={PINK}>{t}</CadText>
      ))}
      {V_LABELS.map(([t, x, y, w], i) => (
        <CadText key={i} x={x} y={y} w={w} fill={PINK} rot>{t}</CadText>
      ))}
      {NOTES.map(([t, x, y, w], i) => (
        <CadText key={i} x={x} y={y} w={w} fill={TEAL}>{t}</CadText>
      ))}
      {V_NOTES.map(([t, x, y, w], i) => (
        <CadText key={i} x={x} y={y} w={w} fill={TEAL} rot>{t}</CadText>
      ))}

      {BUBBLES.map(([t, x, y], i) => (
        <g key={i}>
          <ellipse cx={x} cy={y} rx="15" ry="10" stroke="#f0f0f0" fill="#000" />
          <CadText x={x - 10} y={y + 6} w={20} fill="#f0f0f0" size={17}>{t}</CadText>
        </g>
      ))}
      <circle cx="1338" cy="583" r="15" stroke="#f0f0f0" fill="#000" />
      <text x="1338" y="591" textAnchor="middle" fill="#f0f0f0" fontSize="22" fontFamily="'Liberation Sans', sans-serif">1</text>
      <circle cx="1265" cy="638" r="15" stroke="#f0f0f0" fill="#0a5208" />
      <text x="1265" y="646" textAnchor="middle" fill="#f0f0f0" fontSize="22" fontFamily="'Liberation Sans', sans-serif">G</text>
    </svg>
  );
}

function ViewBar() {
  const cube = (fill, extra) => (
    <svg viewBox="0 0 36 34" className="w-[36px] h-[32px] shrink-0">
      <path d="M1 9l8-8h27v25l-6 7H1z" fill={fill} stroke="#5f7488" strokeWidth="1.500" />
      <path d="M1 9h29v24M30 9l6-8" fill="none" stroke="#5f7488" strokeWidth="1.500" />
      {extra}
    </svg>
  );
  const arrow = <Caret className="w-[10px] h-[6px] ml-[13px] my-[5px] opacity-80" />;
  return (
    <div className="absolute right-0 top-0 w-[38px] h-[340px] bg-[#b6b9bd] pl-[5px] pt-[15px] flex flex-col overflow-hidden">
      <svg viewBox="0 0 36 34" className="w-[36px] h-[32px] shrink-0">
        <ellipse cx="19" cy="17" rx="16" ry="15" fill="#d8dfe6" stroke="#5f7488" strokeWidth="1.500" />
        <ellipse cx="14" cy="11" rx="7" ry="5" fill="#f6f8fa" />
        <ellipse cx="30" cy="9" rx="6" ry="6" fill="#e8edf2" stroke="#5f7488" />
        <path d="M2 28c6-1 16-6 24-14" stroke="#5f7488" strokeWidth="1.500" fill="none" />
      </svg>
      <div className="h-[13px] shrink-0" />
      {cube("#c7ccd2", <text x="9" y="29" fontSize="11" fill="#4f6478" fontFamily="'Liberation Sans', sans-serif">3D</text>)}
      <div className="h-[12px] shrink-0" />
      {cube("#dcecfb", <rect x="7" y="14" width="20" height="13" fill="#eef6fe" stroke="#5f7488" />)}
      {arrow}
      {cube("#c7ccd2")}
      {arrow}
      <svg viewBox="0 0 36 34" className="w-[36px] h-[32px] shrink-0">
        <path d="M28 7a15 15 0 1 0 3 15" fill="none" stroke="#5f7488" strokeWidth="2.500" />
        <path d="M36 5v11H25z" fill="#5f7488" />
      </svg>
      {arrow}
      <div className="border-t border-[#9fa3a8] mt-[6px] mb-[6px] shrink-0" />
      <svg viewBox="0 0 36 36" className="w-[36px] h-[35px] shrink-0">
        <rect x="1" y="3" width="35" height="32" fill="#c7ccd2" stroke="#5f7488" />
        <path d="M1 8h35M18 8v27" stroke="#5f7488" />
        <path d="M5 13h3v3H5zM5 20h3v3H5zM5 27h3v3H5zM22 13h3v3h-3zM22 20h3v3h-3zM22 27h3v3h-3z" fill="none" stroke="#4f6478" />
      </svg>
    </div>
  );
}

function Canvas() {
  return (
    <div className="w-[1162px] h-full shrink-0 bg-black ml-[7px] relative overflow-hidden">
      <CadDrawing />
      <ViewBar />
    </div>
  );
}

const cell = "border-r border-b border-[#d4d4d4] bg-[#f0f0f0] font-normal text-[#444] p-0 text-center whitespace-nowrap overflow-hidden";
const WIDTHS = ["w-[91px]", "w-[92px]", "w-[92px]", "w-[91px]", "w-[91px]", "w-[62px]", "w-[62px]", "w-[61px]", "w-[61px]", "w-[152px]", "w-[122px]", "w-[121px]", "w-[122px]", "w-[121px]", "w-[122px]", "w-[121px]", "w-[122px]", "w-[152px]", "w-[20px]"];

function BeamDialog() {
  return (
    <div className="absolute left-[27px] top-[654px] right-0 bottom-0 border-l-[6px] border-t-[7px] border-[#3f4850] bg-white flex flex-col text-[18px] overflow-hidden">
      <div className="h-[18px] shrink-0 bg-[#d3d5da] flex items-center justify-end pr-[4px] text-[14px] leading-none font-bold text-[#777] font-['Liberation_Sans',sans-serif]">x</div>
      <div className="h-[33px] shrink-0 bg-[#efefef] border-y border-[#d8d8d8] flex items-center pl-[14px] font-bold text-[#777]">梁平法表格</div>
      <div className="h-[43px] shrink-0 bg-[#f0f0f0] border-b-2 border-[#d8d8d8] flex items-center pl-[9px] gap-[12px] text-[#b8b8b8]">
        <span>复制跨数据</span>
        <span>粘贴跨数据</span>
        <span>输入当前列数据</span>
        <span>删除当前列数据</span>
        <span className="text-[#333]">页面设置</span>
        <span>调换起始跨</span>
      </div>
      <table className="table-fixed w-[1881px] ml-[1px] border-collapse leading-none">
        <colgroup>
          {WIDTHS.map((w, i) => (
            <col key={i} className={w} />
          ))}
        </colgroup>
        <thead>
          <tr className="h-[25px]">
            <th rowSpan={2} className={cell}>位置</th>
            <th rowSpan={2} className={cell}>名称</th>
            <th rowSpan={2} className={cell}>跨号</th>
            <th colSpan={2} className={cell}>标高</th>
            <th colSpan={7} className={cell}>构件尺寸(mm)</th>
            <th rowSpan={2} className={cell}>上通长筋</th>
            <th colSpan={3} className={cell}>上部钢筋</th>
            <th colSpan={2} className={cell}>下部钢筋</th>
            <th className={cell} />
          </tr>
          <tr className="h-[25px]">
            {["起点标高", "终点标高", "A1", "A2", "A3", "A4", "跨长", "截面(B*H)", "距左边线距离", "左支座钢筋", "跨中钢筋", "右支座钢筋", "下通长筋", "下部钢筋", ""].map((t, i) => (
              <th key={i} className={cell}>{t}</th>
            ))}
          </tr>
        </thead>
      </table>
    </div>
  );
}

export default function App() {
  return (
    <div className="w-[1897px] h-[889px] relative overflow-hidden bg-[#e8e9eb] font-['Noto_Sans_CJK_SC','Liberation_Sans',sans-serif] text-[18px] leading-none flex flex-col">
      <TabsRow />
      <Ribbon />
      <ComboBar />
      <div className="flex-1 min-h-0 flex pt-[3px] overflow-hidden">
        <NavTree />
        <RightPanels />
        <Canvas />
      </div>
      <BeamDialog />
    </div>
  );
}
